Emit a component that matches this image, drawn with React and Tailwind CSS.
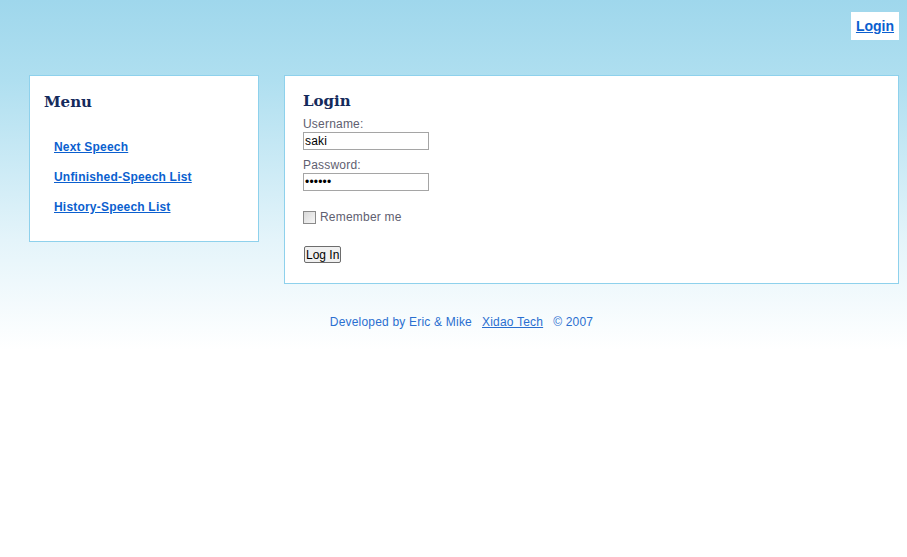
import { useState } from "react";

export default function App() {
  const [username, setUsername] = useState("saki");
  const [password, setPassword] = useState("123456");
  const [remember, setRemember] = useState(false);

  const menu = ["Next Speech", "Unfinished-Speech List", "History-Speech List"];

  return (
    <div className="min-h-[557px] w-full bg-[linear-gradient(180deg,#9fd7ec_0px,#afdff0_80px,#e4f4fa_240px,#ffffff_350px)] font-['Liberation_Sans',sans-serif] text-[12px] tracking-[0.2px]">
      <header className="flex justify-end pt-3 pr-2">
        <a
          href="#"
          className="flex h-[28px] w-[48px] items-center justify-center bg-white text-[14px] font-bold tracking-normal text-[#0b5fcf] underline"
        >
          Login
        </a>
      </header>

      <div className="mt-[35px] flex items-start gap-[25px] pl-[29px] pr-2">
        <aside className="h-[167px] w-[230px] shrink-0 border border-[#8ed1ec] bg-white">
          <h2 className="mt-[16px] pl-[14px] font-['DejaVu_Serif',serif] text-[15px] leading-5 font-bold tracking-normal text-[#142a5c]">
            Menu
          </h2>
          <ul className="mt-[28px] flex flex-col gap-[15px] pl-[24px]">
            {menu.map((m) => (
              <li key={m} className="leading-[15px]">
                <a href="#" className="text-[12px] font-bold text-[#0b5fcf] underline">
                  {m}
                </a>
              </li>
            ))}
          </ul>
        </aside>

        <main className="h-[209px] flex-1 border border-[#8ed1ec] bg-white pl-[18px] pt-[15px]">
          <h2 className="font-['DejaVu_Serif',serif] text-[15px] leading-5 font-bold tracking-normal text-[#142a5c]">
            Login
          </h2>
          <label className="mt-[6px] block leading-[15px] text-[#606070]">Username:</label>
          <input
            value={username}
            onChange={(e) => setUsername(e.target.value)}
            className="block h-[18px] w-[126px] border border-[#a5a5a5] bg-white px-[1px] text-[12px] leading-4 text-black outline-none"
          />
          <label className="mt-[8px] block leading-[15px] text-[#606070]">Password:</label>
          <input
            type="password"
            value={password}
            onChange={(e) => setPassword(e.target.value)}
            className="block h-[18px] w-[126px] border border-[#a5a5a5] bg-white px-[1px] text-[12px] leading-4 text-black outline-none"
          />
          <label className="mt-[19px] flex items-center gap-[4px] text-[#606070]">
            <input
              type="checkbox"
              checked={remember}
              onChange={(e) => setRemember(e.target.checked)}
              className="m-0 h-[13px] w-[13px] appearance-none border border-[#8a8a8a] bg-[linear-gradient(135deg,#d8d8d8,#f6f6f6)]"
            />
            <span className="leading-[15px]">Remember me</span>
          </label>
          <button className="ml-[1px] mt-[21px] block h-[17px] rounded-[2px] border border-[#6d6d6d] bg-[#f0f0f0] px-[1px] text-[12px] leading-[14px] tracking-normal text-black">
            Log In
          </button>
        </main>
      </div>

      <footer className="mt-[29px] flex justify-center pl-[24px] pr-2 text-[12px] text-[#2a6fd0]">
        <span>Developed by Eric &amp; Mike</span>
        <a href="#" className="ml-[10px] underline">
          Xidao Tech
        </a>
        <span className="ml-[10px]">© 2007</span>
      </footer>
    </div>
  );
}
